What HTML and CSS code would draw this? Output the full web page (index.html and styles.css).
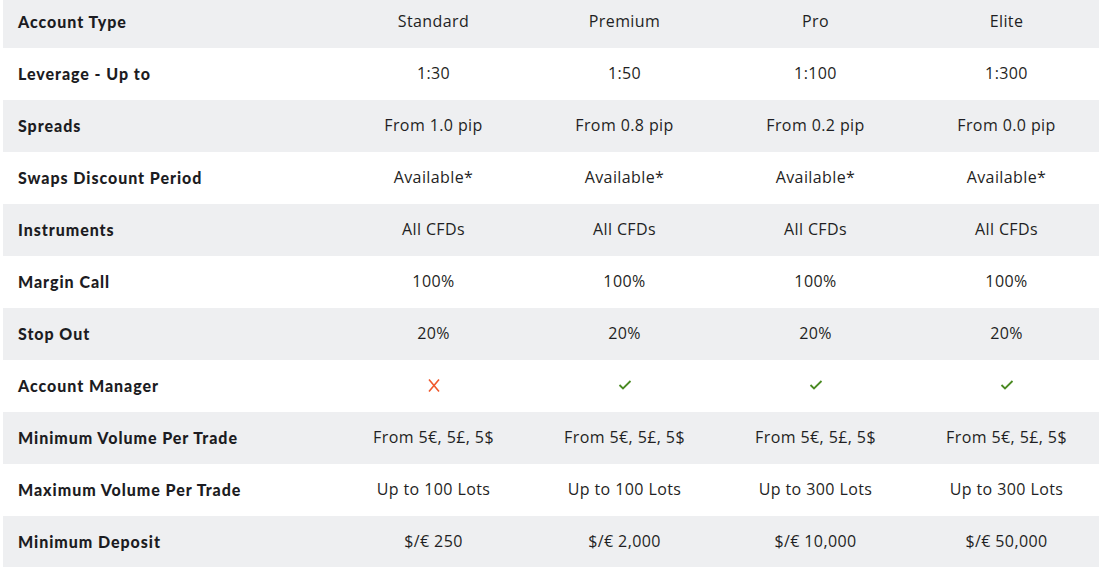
FILE: index.html
```html
<!DOCTYPE html>
<html>
<head>
<meta charset="utf-8">
<link rel="stylesheet" href="styles.css">
</head>
<body>
<div class="table">
  <div class="row gray"><div class="label">Account Type</div><div class="cell">Standard</div><div class="cell">Premium</div><div class="cell">Pro</div><div class="cell">Elite</div></div>
  <div class="row"><div class="label">Leverage - Up to</div><div class="cell">1:30</div><div class="cell">1:50</div><div class="cell">1:100</div><div class="cell">1:300</div></div>
  <div class="row gray"><div class="label">Spreads</div><div class="cell">From 1.0 pip</div><div class="cell">From 0.8 pip</div><div class="cell">From 0.2 pip</div><div class="cell">From 0.0 pip</div></div>
  <div class="row"><div class="label">Swaps Discount Period</div><div class="cell">Available*</div><div class="cell">Available*</div><div class="cell">Available*</div><div class="cell">Available*</div></div>
  <div class="row gray"><div class="label">Instruments</div><div class="cell">All CFDs</div><div class="cell">All CFDs</div><div class="cell">All CFDs</div><div class="cell">All CFDs</div></div>
  <div class="row"><div class="label">Margin Call</div><div class="cell">100%</div><div class="cell">100%</div><div class="cell">100%</div><div class="cell">100%</div></div>
  <div class="row gray"><div class="label">Stop Out</div><div class="cell">20%</div><div class="cell">20%</div><div class="cell">20%</div><div class="cell">20%</div></div>
  <div class="row"><div class="label">Account Manager</div>
    <div class="cell"><svg class="icon" width="14" height="15" viewBox="0 0 14 15"><path d="M2 1.5 L12 13.5 M12 1.5 L2 13.5" stroke="#f0592d" stroke-width="1.6" fill="none"/></svg></div>
    <div class="cell"><svg class="icon" width="14" height="12" viewBox="0 0 14 12"><path d="M1.5 6 L5 9.5 L12.5 2" stroke="#4a8a22" stroke-width="1.8" fill="none"/></svg></div>
    <div class="cell"><svg class="icon" width="14" height="12" viewBox="0 0 14 12"><path d="M1.5 6 L5 9.5 L12.5 2" stroke="#4a8a22" stroke-width="1.8" fill="none"/></svg></div>
    <div class="cell"><svg class="icon" width="14" height="12" viewBox="0 0 14 12"><path d="M1.5 6 L5 9.5 L12.5 2" stroke="#4a8a22" stroke-width="1.8" fill="none"/></svg></div>
  </div>
  <div class="row gray"><div class="label">Minimum Volume Per Trade</div><div class="cell">From 5€, 5£, 5$</div><div class="cell">From 5€, 5£, 5$</div><div class="cell">From 5€, 5£, 5$</div><div class="cell">From 5€, 5£, 5$</div></div>
  <div class="row"><div class="label">Maximum Volume Per Trade</div><div class="cell">Up to 100 Lots</div><div class="cell">Up to 100 Lots</div><div class="cell">Up to 300 Lots</div><div class="cell">Up to 300 Lots</div></div>
  <div class="row gray"><div class="label">Minimum Deposit</div><div class="cell">$/€ 250</div><div class="cell">$/€ 2,000</div><div class="cell">$/€ 10,000</div><div class="cell">$/€ 50,000</div></div>
</div>
</body>
</html>
```
FILE: styles.css
```css
html, body {
  margin: 0;
  padding: 0;
  background: #ffffff;
  overflow: hidden;
}
.table {
  margin-top: -4px;
  margin-left: 3px;
  width: 1099px;
}
.row {
  display: grid;
  grid-template-columns: 335px repeat(4, 191px);
  height: 52px;
  align-items: center;
  background: #ffffff;
}
.row.gray {
  background: #eeeff1;
}
.label {
  padding-left: 15px;
  padding-bottom: 2px;
  font-family: "Lato", "Liberation Sans", sans-serif;
  font-weight: 900;
  font-size: 16px;
  color: #1c1c22;
  letter-spacing: 0.95px;
}
.cell {
  padding-bottom: 2px;
  text-align: center;
  font-family: "Open Sans", "Liberation Sans", sans-serif;
  font-size: 16px;
  color: #1f1f24;
  letter-spacing: 0.4px;
  display: flex;
  justify-content: center;
  align-items: center;
}
.icon {
  display: block;
}
```
